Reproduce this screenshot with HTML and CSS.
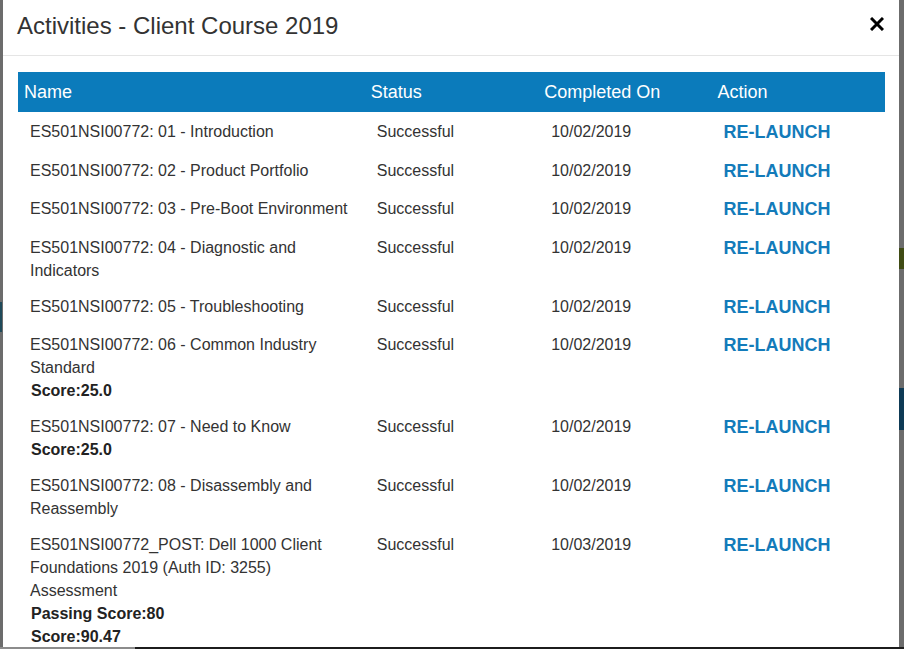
FILE: index.html
```html
<!DOCTYPE html>
<html lang="en">
<head>
<meta charset="utf-8">
<title>Activities - Client Course 2019</title>
<link rel="stylesheet" href="styles.css">
</head>
<body>
<div class="modal">
  <div class="modal-header">
    <h4 class="modal-title">Activities - Client Course 2019</h4>
    <button class="close" type="button" aria-label="Close">
      <svg width="14" height="14" viewBox="0 0 14 14"><path d="M1 1 L13 13 M13 1 L1 13" stroke="#000" stroke-width="3" fill="none"/></svg>
    </button>
  </div>
  <div class="modal-body">
    <table class="activities">
      <colgroup>
        <col class="c-name"><col class="c-status"><col class="c-date"><col class="c-action">
      </colgroup>
      <thead>
        <tr><th>Name</th><th>Status</th><th>Completed On</th><th>Action</th></tr>
      </thead>
      <tbody>
        <tr><td>ES501NSI00772: 01 - Introduction</td><td>Successful</td><td>10/02/2019</td><td class="action"><a href="#">RE-LAUNCH</a></td></tr>
        <tr><td>ES501NSI00772: 02 - Product Portfolio</td><td>Successful</td><td>10/02/2019</td><td class="action"><a href="#">RE-LAUNCH</a></td></tr>
        <tr><td>ES501NSI00772: 03 - Pre-Boot Environment</td><td>Successful</td><td>10/02/2019</td><td class="action"><a href="#">RE-LAUNCH</a></td></tr>
        <tr><td>ES501NSI00772: 04 - Diagnostic and Indicators</td><td>Successful</td><td>10/02/2019</td><td class="action"><a href="#">RE-LAUNCH</a></td></tr>
        <tr><td>ES501NSI00772: 05 - Troubleshooting</td><td>Successful</td><td>10/02/2019</td><td class="action"><a href="#">RE-LAUNCH</a></td></tr>
        <tr><td>ES501NSI00772: 06 - Common Industry Standard<div class="score">Score:25.0</div></td><td>Successful</td><td>10/02/2019</td><td class="action"><a href="#">RE-LAUNCH</a></td></tr>
        <tr><td>ES501NSI00772: 07 - Need to Know<div class="score">Score:25.0</div></td><td>Successful</td><td>10/02/2019</td><td class="action"><a href="#">RE-LAUNCH</a></td></tr>
        <tr><td>ES501NSI00772: 08 - Disassembly and Reassembly</td><td>Successful</td><td>10/02/2019</td><td class="action"><a href="#">RE-LAUNCH</a></td></tr>
        <tr><td>ES501NSI00772_POST: Dell 1000 Client Foundations 2019 (Auth ID: 3255) Assessment<div class="score">Passing Score:80</div><div class="score">Score:90.47</div></td><td>Successful</td><td>10/03/2019</td><td class="action"><a href="#">RE-LAUNCH</a></td></tr>
      </tbody>
    </table>
  </div>
</div>
</body>
</html>
```
FILE: styles.css
```css
html, body {
  margin: 0;
  height: 649px;
}
body {
  box-sizing: border-box;
  padding: 0 5px 2px 3px;
  overflow: hidden;
  font-family: "Liberation Sans", Arial, sans-serif;
  color: #333;
  background:
    linear-gradient(#3f4b14, #3f4b14) right 0 top 248px / 5px 21px no-repeat,
    linear-gradient(#0e3a55, #0e3a55) right 0 top 388px / 5px 42px no-repeat,
    linear-gradient(#1f4a5a, #1f4a5a) left 0 top 302px / 2px 30px no-repeat,
    linear-gradient(to right, #8c8c8c 135px, #1c1c1c 135px) left 0 bottom 0 / 100% 2px no-repeat,
    #6c6c6c;
}
.modal {
  height: 647px;
  background: #fff;
  overflow: hidden;
}
.modal-header {
  display: flex;
  justify-content: space-between;
  align-items: flex-start;
  padding: 12px 15px 16px 14px;
  border-bottom: 1px solid #e5e5e5;
}
.modal-title {
  margin: 0;
  font-size: 24px;
  line-height: 27px;
  font-weight: normal;
  color: #333;
}
.close {
  margin: 5px 0 0;
  padding: 0;
  border: 0;
  background: none;
  width: 14px;
  height: 14px;
  display: block;
  cursor: pointer;
}
.close svg {
  display: block;
}
.modal-body {
  padding: 16px 14px 0 15px;
}
.activities {
  width: 867px;
  border-collapse: collapse;
  table-layout: fixed;
}
.c-name { width: 40%; }
.c-status, .c-date, .c-action { width: 20%; }
.activities th {
  background: #0b7bbb;
  color: #fff;
  font-weight: normal;
  font-size: 18px;
  line-height: 24px;
  text-align: left;
  padding: 8px 6px;
}
.activities td {
  font-size: 16px;
  line-height: 23px;
  padding: 8px 12px 5px;
  vertical-align: top;
  text-align: left;
}
.activities td:nth-child(3) {
  padding-left: 13px;
}
.score {
  font-weight: bold;
  color: #222;
  padding-left: 1px;
}
.activities td.action {
  font-size: 18px;
  line-height: 25.5px;
}
.action a {
  color: #137bba;
  font-weight: bold;
  text-decoration: none;
}
```
